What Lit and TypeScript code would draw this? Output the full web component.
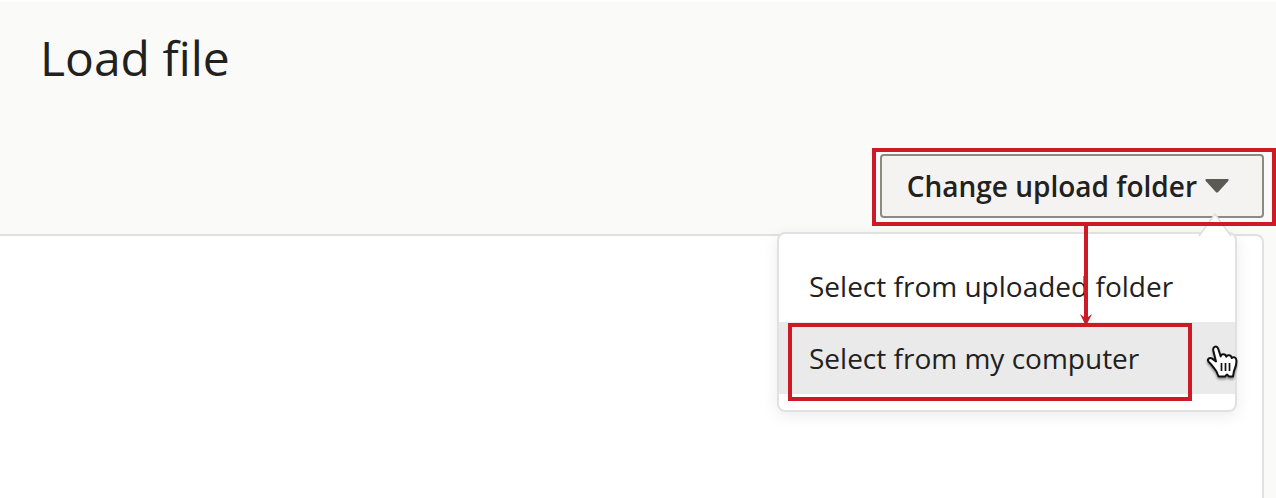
import { LitElement, html, css } from "lit";
import { customElement, property, state } from "lit/decorators.js";

@customElement("upload-menu")
class UploadMenu extends LitElement {
  @property() label = "Change upload folder";
  @state() private items = ["Select from uploaded folder", "Select from my computer"];
  @state() private active = 1;

  static styles = css`
    :host {
      display: block;
      position: relative;
    }
    .trigger {
      display: flex;
      align-items: center;
      gap: 8px;
      height: 64px;
      box-sizing: border-box;
      padding: 0 33px 0 25px;
      border: 2px solid #8b8b80;
      border-radius: 4px;
      background: #f4f3f2;
      color: #21211d;
      font: 600 28px/40px "Open Sans", "Noto Sans", sans-serif;
      white-space: nowrap;
    }
    .caret {
      display: block;
      width: 24px;
      height: 14px;
    }
    .menu {
      position: absolute;
      top: 78px;
      right: 27px;
      width: 460px;
      box-sizing: border-box;
      padding: 16px 0;
      border: 2px solid #e1e1df;
      border-radius: 8px;
      background: #fff;
      box-shadow: 0 4px 16px rgba(0, 0, 0, 0.08);
    }
    .pointer {
      position: absolute;
      top: -21px;
      right: 3px;
      width: 34px;
      height: 24px;
    }
    .item {
      display: block;
      width: 100%;
      height: 72px;
      padding: 0 30px;
      border: 0;
      background: none;
      color: #21211d;
      font: 400 28px/40px "Open Sans", "Noto Sans", sans-serif;
      text-align: left;
      white-space: nowrap;
    }
    .item.active {
      background: #eaeaea;
    }
    .mark {
      position: absolute;
      box-sizing: border-box;
      border: 4px solid #cc1b27;
      pointer-events: none;
    }
    .mark-trigger {
      inset: -6px -12px -8px -8px;
    }
    .mark-item {
      top: 169px;
      right: 72px;
      width: 404px;
      height: 78px;
    }
    .arrow {
      position: absolute;
      top: 70px;
      right: 170px;
      width: 16px;
      height: 102px;
    }
    .hand {
      position: absolute;
      top: 189px;
      right: 23px;
      width: 36px;
      height: 40px;
      filter: drop-shadow(0 2px 1px rgba(0, 0, 0, 0.4));
    }
  `;

  render() {
    return html`
      <button class="trigger" aria-haspopup="menu" aria-expanded="true">
        ${this.label}
        <svg class="caret" viewBox="0 0 24 14" aria-hidden="true">
          <path d="M1.5 0H22.5Q24.5 .3 23 2.2L13.2 13Q12 14.2 10.8 13L1 2.2Q-.5 .3 1.5 0Z" fill="#5b5953" />
        </svg>
      </button>
      <div class="menu" role="menu">
        <svg class="pointer" viewBox="0 0 34 24" aria-hidden="true">
          <path d="M1 23L17 1L33 23Z" fill="#fff" />
          <path d="M1 23L17 1L33 23" fill="none" stroke="#dededc" stroke-width="1.5" />
        </svg>
        ${this.items.map(
          (text, i) => html`<button
            class="item ${i === this.active ? "active" : ""}"
            role="menuitem"
            @mouseenter=${() => (this.active = i)}
          >${text}</button>`
        )}
      </div>
      <div class="mark mark-trigger"></div>
      <svg class="arrow" viewBox="0 0 16 102" aria-hidden="true">
        <path d="M6 0H10V93L14 90L8 102L2 90L6 93Z" fill="#cc1b27" />
      </svg>
      <div class="mark mark-item"></div>
      <svg class="hand" viewBox="0 0 36 40" aria-hidden="true">
        <path
          d="M11.5 28.5C9 25 6.500 21.500 3.800 19C1.600 16.500 4.200 13.800 7.200 15.600L11 18.500L8.300 7.500C7.500 3.200 12 2.200 13.300 6L15.700 13.500C16 10.700 20.500 10.300 21.300 13.700C22.300 11.300 26.300 11.700 26.700 14.900C28.500 13.300 31.300 14.500 31.400 17.500C31.800 22 30.300 25 29 28L28 33.500H24L22 31.500L20 33.500H13.500Z"
          fill="#fff"
          stroke="#111"
          stroke-width="2"
          stroke-linejoin="round"
        />
        <path d="M16.500 20V28M20.500 20V28M24.500 20V28" stroke="#111" stroke-width="1.700" />
      </svg>
    `;
  }
}

@customElement("app-root")
class AppRoot extends LitElement {
  static styles = css`
    :host {
      display: flex;
      flex-direction: column;
      min-height: 100vh;
      box-sizing: border-box;
      overflow: hidden;
      border-top: 2px solid #fff;
      background: #fafaf9;
      color: #21211d;
      font-family: "Open Sans", "Noto Sans", sans-serif;
    }
    .title {
      margin: 0;
      padding: 24px 40px;
      font-size: 48px;
      line-height: 64px;
      font-weight: 400;
    }
    .toolbar {
      display: flex;
      justify-content: flex-end;
      padding: 40px 12px 16px;
    }
    .panel {
      flex: 1;
      margin-right: 12px;
      border: 2px solid #e1e1df;
      border-width: 2px 2px 0 0;
      border-top-right-radius: 8px;
      background: #fff;
    }
  `;

  render() {
    return html`
      <h1 class="title">Load file</h1>
      <div class="toolbar"><upload-menu></upload-menu></div>
      <main class="panel"></main>
    `;
  }
}
